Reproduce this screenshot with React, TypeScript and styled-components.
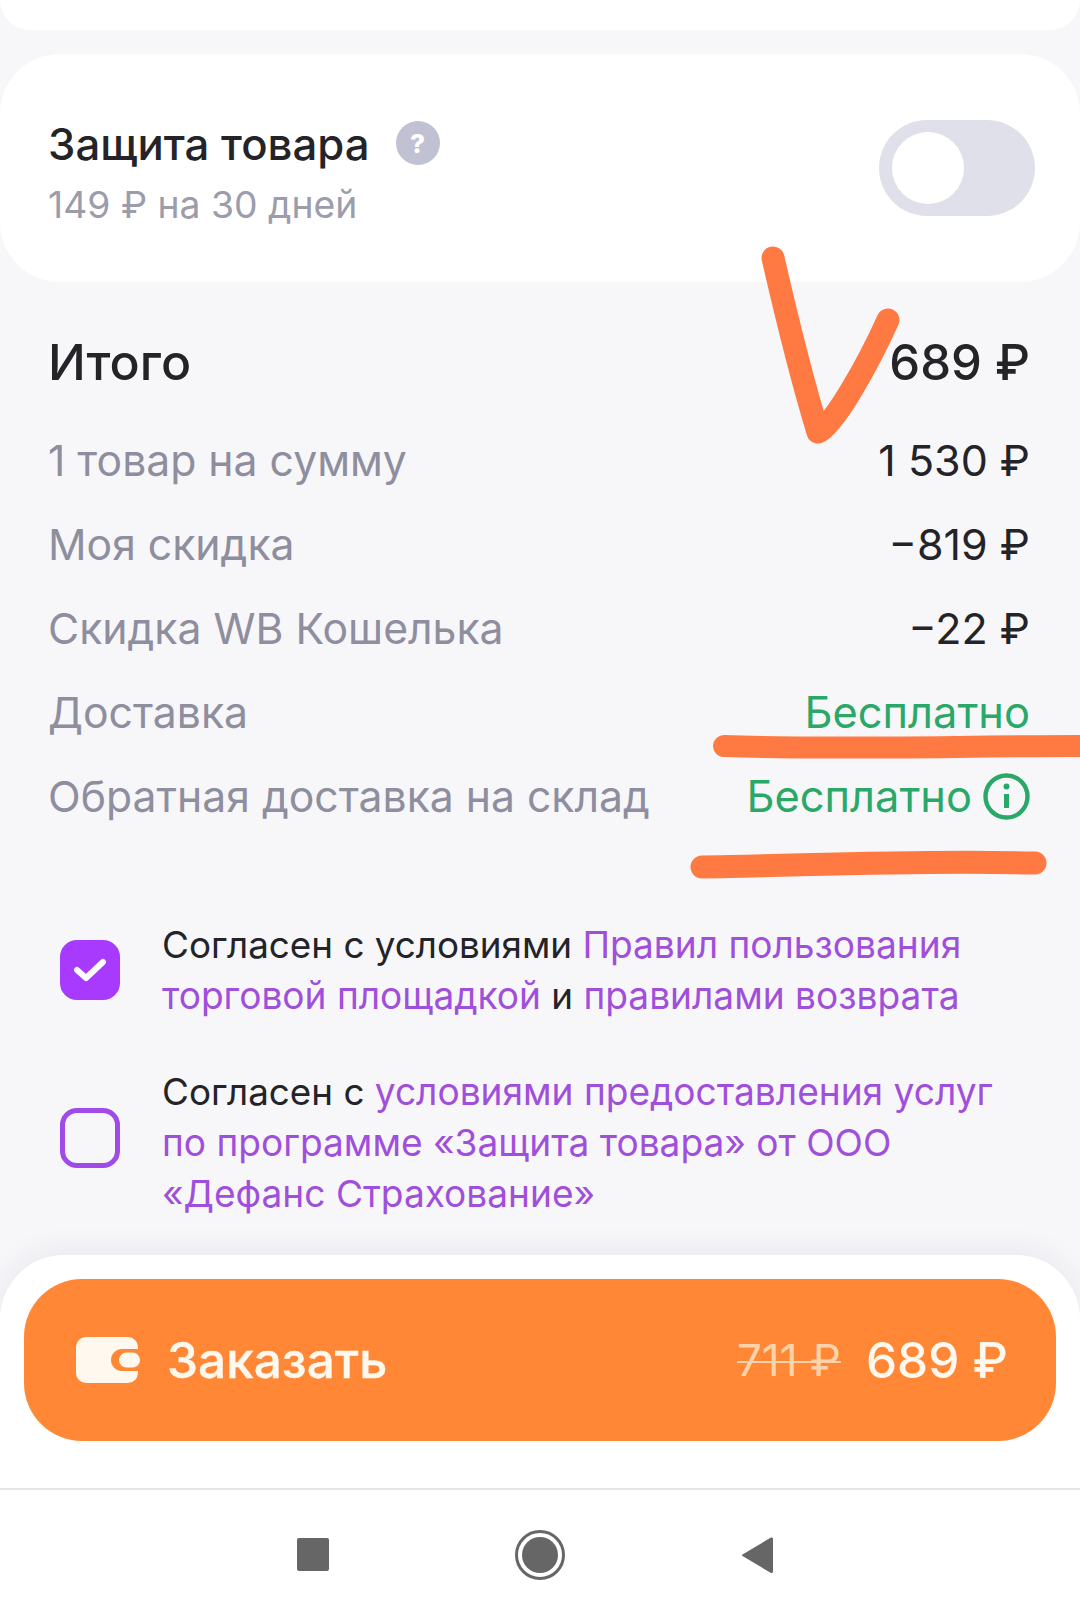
import React from "react";
import styled, { createGlobalStyle } from "styled-components";

const Global = createGlobalStyle`
  html, body { margin: 0; padding: 0; background: #f7f7fa; }
  body { font-family: Inter, "Noto Sans", sans-serif; }
  * { box-sizing: border-box; }
`;

const Page = styled.div`
  position: relative;
  width: 1080px;
  height: 1619px;
  overflow: hidden;
  background: #f7f7fa;
  display: flex;
  flex-direction: column;
`;

const TopCard = styled.div`
  height: 30px;
  margin-bottom: 24px;
  background: #fff;
  border-radius: 0 0 60px 60px;
`;

const ProtectCard = styled.section`
  height: 228px;
  padding: 0 45px 0 48px;
  background: #fff;
  border-radius: 60px;
  display: flex;
  align-items: center;
  justify-content: space-between;
`;

const ProtectText = styled.div`
  display: flex;
  flex-direction: column;
  gap: 11px;
  margin-top: 11px;
`;

const TitleRow = styled.div`
  display: flex;
  align-items: center;
  gap: 26px;
`;

const Title = styled.div`
  font-size: 43.7px;
  line-height: 52px;
  font-weight: 500;
  color: #232328;
`;

const Hint = styled.span`
  width: 44px;
  height: 44px;
  margin-top: -4px;
  border-radius: 50%;
  background: #c0c1d3;
  color: #fff;
  font-size: 26px;
  font-weight: 800;
  display: flex;
  align-items: center;
  justify-content: center;
`;

const Sub = styled.div`
  font-size: 37.3px;
  line-height: 46px;
  color: #9c9cab;
`;

const Toggle = styled.div`
  width: 156px;
  height: 96px;
  padding: 12px 13px;
  border-radius: 48px;
  background: #dfe0ea;
`;

const Knob = styled.div`
  width: 72px;
  height: 72px;
  border-radius: 50%;
  background: #fff;
`;

const Summary = styled.section`
  padding: 38px 50px 0 48px;
  display: flex;
  flex-direction: column;
`;

const Row = styled.div<{ $total?: boolean }>`
  height: 84px;
  margin-bottom: ${(p) => (p.$total ? "14px" : "0")};
  display: flex;
  align-items: center;
  justify-content: space-between;
  font-size: ${(p) => (p.$total ? "50px" : "42.7px")};
  font-weight: ${(p) => (p.$total ? 500 : 400)};
`;

const Label = styled.span<{ $total?: boolean }>`
  color: ${(p) => (p.$total ? "#232328" : "#8e8e9e")};
`;

const Value = styled.span<{ $total?: boolean }>`
  color: #232328;
  font-size: ${(p) => (p.$total ? "49px" : "43px")};
`;

const Free = styled.span`
  color: #2aa868;
  font-size: 43.4px;
  display: flex;
  align-items: center;
  gap: 11px;
`;

const Agreements = styled.section`
  padding: 81px 60px 0 60px;
  display: flex;
  flex-direction: column;
  gap: 45px;
`;

const Agreement = styled.div`
  display: flex;
  align-items: center;
  gap: 42px;
`;

const Box = styled.div<{ $on?: boolean; $raised?: boolean }>`
  flex: none;
  width: 60px;
  height: 60px;
  margin-bottom: ${(p) => (p.$raised ? "10px" : "0")};
  border-radius: 17px;
  border: 5px solid ${(p) => (p.$on ? "#a73afd" : "#a04be8")};
  background: ${(p) => (p.$on ? "#a73afd" : "transparent")};
  display: flex;
  align-items: center;
  justify-content: center;
`;

const AgreeText = styled.p`
  margin: 0;
  font-size: 36.8px;
  line-height: 51px;
  color: #232328;
`;

const Link = styled.span`
  color: #a04fdc;
  font-size: 37.1px;
`;

const OrderPanel = styled.section`
  margin-top: 36px;
  height: 233px;
  padding: 24px;
  background: #fff;
  border-radius: 64px 64px 0 0;
  box-shadow: 0 -4px 30px rgba(40, 40, 70, 0.07);
`;

const OrderButton = styled.div`
  height: 162px;
  padding: 0 48px 0 52px;
  border-radius: 58px;
  background: #ff8735;
  color: #fff8ee;
  display: flex;
  align-items: center;
`;

const OrderLabel = styled.span`
  margin-left: 27px;
  font-size: 49.5px;
  font-weight: 500;
  -webkit-text-stroke: 0.4px #fff8ee;
  flex: 1;
`;

const OldPrice = styled.span`
  font-size: 44px;
  color: #ffd3aa;
  text-decoration: line-through;
  text-decoration-thickness: 2px;
  margin-right: 25px;
`;

const OrderPrice = styled.span`
  font-size: 49.5px;
  font-weight: 500;
`;

const NavBar = styled.nav`
  flex: 1;
  background: #fff;
  border-top: 2px solid #e6e6ea;
  position: relative;
  z-index: 1;
  display: flex;
  align-items: center;
  justify-content: center;
  gap: 176px;
  padding-right: 11px;
`;

const StopIcon = styled.svg`
  margin-right: 10px;
`;

const Marks = styled.svg`
  position: absolute;
  left: 0;
  top: 0;
  pointer-events: none;
  z-index: 2;
`;

function InfoIcon() {
  return (
    <svg width="47" height="47" viewBox="0 0 47 47" fill="none" stroke="#2aa868">
      <circle cx="23.5" cy="23.5" r="21" strokeWidth="4.4" />
      <path d="M23.5 21v14" strokeWidth="5" />
      <circle cx="23.5" cy="13.5" r="3" fill="#2aa868" stroke="none" />
    </svg>
  );
}

function WalletIcon() {
  return (
    <svg width="64" height="46" viewBox="0 0 64 46">
      <path
        d="M10 0h42a10 10 0 0 1 10 10v2H46a11 11 0 0 0 0 22h16v2a10 10 0 0 1-10 10H10A10 10 0 0 1 0 36V10A10 10 0 0 1 10 0Z"
        fill="#fff8ee"
      />
      <rect x="43" y="15.5" width="21" height="15" rx="7.5" fill="#fff8ee" />
    </svg>
  );
}

export default function App() {
  return (
    <Page>
      <Global />
      <TopCard />
      <ProtectCard>
        <ProtectText>
          <TitleRow>
            <Title>Защита товара</Title>
            <Hint>?</Hint>
          </TitleRow>
          <Sub>149 ₽ на 30 дней</Sub>
        </ProtectText>
        <Toggle>
          <Knob />
        </Toggle>
      </ProtectCard>
      <Summary>
        <Row $total>
          <Label $total>Итого</Label>
          <Value $total>689 ₽</Value>
        </Row>
        <Row>
          <Label>1 товар на сумму</Label>
          <Value>1 530 ₽</Value>
        </Row>
        <Row>
          <Label>Моя скидка</Label>
          <Value>−819 ₽</Value>
        </Row>
        <Row>
          <Label>Скидка WB Кошелька</Label>
          <Value>−22 ₽</Value>
        </Row>
        <Row>
          <Label>Доставка</Label>
          <Free>Бесплатно</Free>
        </Row>
        <Row>
          <Label>Обратная доставка на склад</Label>
          <Free>
            Бесплатно
            <InfoIcon />
          </Free>
        </Row>
      </Summary>
      <Agreements>
        <Agreement>
          <Box $on>
            <svg width="34" height="26" viewBox="0 0 34 26" fill="none">
              <path d="M4 13l9 8L30 5" stroke="#fff" strokeWidth="6" strokeLinecap="round" strokeLinejoin="round" />
            </svg>
          </Box>
          <AgreeText>
            Согласен с условиями <Link>Правил пользования торговой площадкой</Link> и{" "}
            <Link>правилами возврата</Link>
          </AgreeText>
        </Agreement>
        <Agreement>
          <Box $raised />
          <AgreeText>
            Согласен с <Link>условиями предоставления услуг по программе «Защита товара» от ООО «Дефанс Страхование»</Link>
          </AgreeText>
        </Agreement>
      </Agreements>
      <OrderPanel>
        <OrderButton>
          <WalletIcon />
          <OrderLabel>Заказать</OrderLabel>
          <OldPrice>711 ₽</OldPrice>
          <OrderPrice>689 ₽</OrderPrice>
        </OrderButton>
      </OrderPanel>
      <NavBar>
        <StopIcon width="32" height="33" viewBox="0 0 32 33">
          <rect width="32" height="33" rx="2" fill="#666" />
        </StopIcon>
        <svg width="50" height="50" viewBox="0 0 50 50">
          <circle cx="25" cy="25" r="23.5" fill="none" stroke="#666" strokeWidth="3" />
          <circle cx="25" cy="25" r="18" fill="#666" />
        </svg>
        <svg width="32" height="38" viewBox="0 0 32 38">
          <path d="M30 1.5 1.5 18.5a1 1 0 0 0 0 1.5L30 37a1.5 1.5 0 0 0 2-1.5V3a1.5 1.5 0 0 0-2-1.5Z" fill="#666" />
        </svg>
      </NavBar>
      <Marks width="1080" height="1619" viewBox="0 0 1080 1619" fill="none" stroke="#ff7a42" strokeLinecap="round" strokeLinejoin="round">
        <path d="M773 258 C785 310 802 380 818 432 C834 426 870 360 888 320" strokeWidth="23" />
        <path d="M724 746 C820 750 960 746 1090 746" strokeWidth="22" />
        <path d="M702 867 C800 866 900 860 1035 863" strokeWidth="23" />
      </Marks>
    </Page>
  );
}
